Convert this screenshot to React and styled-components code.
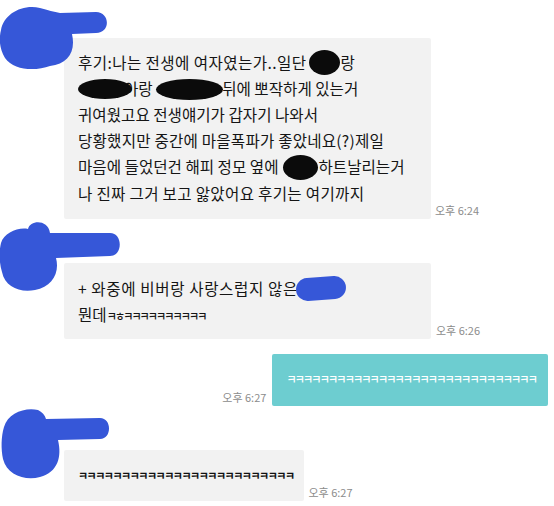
import React from 'react';
import styled, { createGlobalStyle } from 'styled-components';

const Global = createGlobalStyle`
  html, body { margin: 0; padding: 0; background: #ffffff; }
  body { font-family: "Noto Sans CJK KR", "Noto Sans", sans-serif; }
`;

const Page = styled.main`
  width: 554px;
  height: 506px;
  overflow: hidden;
  display: flex;
  flex-direction: column;
  background: #ffffff;
`;

const Group = styled.section`
  position: relative;
  margin-top: ${(p) => p.$top}px;
  padding: 38px 0 0 64px;
  display: flex;
  align-items: flex-end;
`;

const MineRow = styled.section`
  margin-top: ${(p) => p.$top}px;
  padding-right: 6px;
  display: flex;
  justify-content: flex-end;
  align-items: flex-end;
`;

const Scribble = styled.svg`
  position: absolute;
  left: 0;
  top: -10px;
  z-index: 2;
  overflow: visible;
`;

const Bubble = styled.div`
  box-sizing: border-box;
  width: ${(p) => (p.$w ? `${p.$w}px` : 'auto')};
  padding: ${(p) => p.$pad};
  background: #f2f2f2;
  color: #151515;
  font-size: 15.6px;
  line-height: 26px;
  white-space: nowrap;
  border-radius: 2px;
`;

const MineBubble = styled.div`
  box-sizing: border-box;
  height: 52px;
  padding: 0 12px 0 14px;
  display: flex;
  align-items: center;
  background: #6dcdd0;
  color: #ffffff;
  border-radius: 2px;
`;

const ShortBubble = styled.div`
  box-sizing: border-box;
  height: 51px;
  padding: 0 10px 0 14px;
  display: flex;
  align-items: center;
  background: #f2f2f2;
  border-radius: 2px;
`;

const Line = styled.div`
  display: block;
  letter-spacing: ${(p) => p.$ls || 0}px;
`;

const Time = styled.span`
  flex-shrink: 0;
  margin: 0 ${(p) => p.$mr || 0}px 3px ${(p) => p.$ml || 0}px;
  font-size: 11px;
  line-height: 12px;
  color: #8c8c8c;
  white-space: nowrap;
`;

const Kk = styled.span`
  font-size: 11px;
  font-weight: ${(p) => (p.$bold ? 700 : 500)};
  color: ${(p) => p.$color || 'inherit'};
  letter-spacing: ${(p) => p.$ls}px;
  line-height: 1;
  white-space: nowrap;
`;

const Redact = styled.span`
  position: relative;
  z-index: 1;
  display: inline-block;
  vertical-align: middle;
  width: ${(p) => p.$w}px;
  height: ${(p) => p.$h}px;
  margin-left: ${(p) => p.$ml || 0}px;
  margin-right: ${(p) => p.$mr || 0}px;
  margin-top: -4px;
  background: ${(p) => p.$color || '#0b0b0b'};
  border-radius: ${(p) => p.$radius || '50%'};
  transform: rotate(${(p) => p.$rot || 0}deg);
`;

const blue = '#3657d8';

const blobPaths = [
  'M 1 30 C 4 14, 22 4, 40 8 C 48 10, 54 12, 60 13 L 96 12 C 110 12, 111 33, 96 33 L 72 34 C 76 52, 68 64, 50 66 C 36 71, 14 71, 5 58 C -1 48, -1 38, 1 30 Z',
  'M 1 18 C 4 8, 18 2, 28 4 C 30 -5, 48 -6, 50 8 L 110 8 C 123 8, 123 31, 110 31 L 56 33 C 60 48, 52 62, 35 65 C 20 68, 5 62, 2 47 C -1 37, -1 26, 1 18 Z',
  'M 4 15 C 8 1, 25 -5, 38 -2 C 42 0, 45 3, 46 7 L 100 6 C 112 6, 112 27, 100 27 L 58 28 C 62 45, 58 60, 40 65 C 25 69, 7 63, 3 47 C 1 37, 1 25, 4 15 Z',
];

function Blob({ d }) {
  return (
    <Scribble width="125" height="85" viewBox="0 -10 125 85" aria-hidden="true">
      <path d={d} fill={blue} />
    </Scribble>
  );
}

const K = (n) => 'ㅋ'.repeat(n);

export default function App() {
  return (
    <Page>
      <Global />
      <Group $top={0}>
        <Blob d={blobPaths[0]} />
        <Bubble $w={367} $pad="11px 14px 13px 14px">
          <Line $ls={0.4}>
            후기:나는 전생에 여자였는가..일단<Redact $w={31} $h={25} $ml={3} />랑
          </Line>
          <Line>
            <Redact $w={54} $h={20} $mr={-8} />아랑 <Redact $w={67} $h={21} $mr={-1} />뒤에 뽀작하게 있는거
          </Line>
          <Line>귀여웠고요 전생얘기가 갑자기 나와서</Line>
          <Line $ls={0.2}>당황했지만 중간에 마을폭파가 좋았네요(?)제일</Line>
          <Line>
            마음에 들었던건 해피 정모 옆에<Redact $w={35} $h={25} $ml={5} />하트날리는거
          </Line>
          <Line $ls={0.3}>나 진짜 그거 보고 앓았어요 후기는 여기까지</Line>
        </Bubble>
        <Time $ml={4}>오후 6:24</Time>
      </Group>

      <Group $top={6}>
        <Blob d={blobPaths[1]} />
        <Bubble $w={367} $pad="12px 14px 12px 14px">
          <Line $ls={0.6}>
            + 와중에 비버랑 사랑스럽지 않은<Redact $w={50} $h={23} $ml={-2} $color={blue} $rot={-4} $radius="12px" />
          </Line>
          <Line>
            뭔데<Kk $ls={-1.9}>ㅋㅎ{K(10)}</Kk>
          </Line>
        </Bubble>
        <Time $ml={5}>오후 6:26</Time>
      </Group>

      <MineRow $top={15}>
        <Time $mr={6}>오후 6:27</Time>
        <MineBubble>
          <Kk $ls={-1.8} $color="#ffffff">{K(30)}</Kk>
        </MineBubble>
      </MineRow>

      <Group $top={6}>
        <Blob d={blobPaths[2]} />
        <ShortBubble>
          <Kk $ls={-1.5} $bold $color="#111111">{K(25)}</Kk>
        </ShortBubble>
        <Time $ml={5}>오후 6:27</Time>
      </Group>
    </Page>
  );
}
